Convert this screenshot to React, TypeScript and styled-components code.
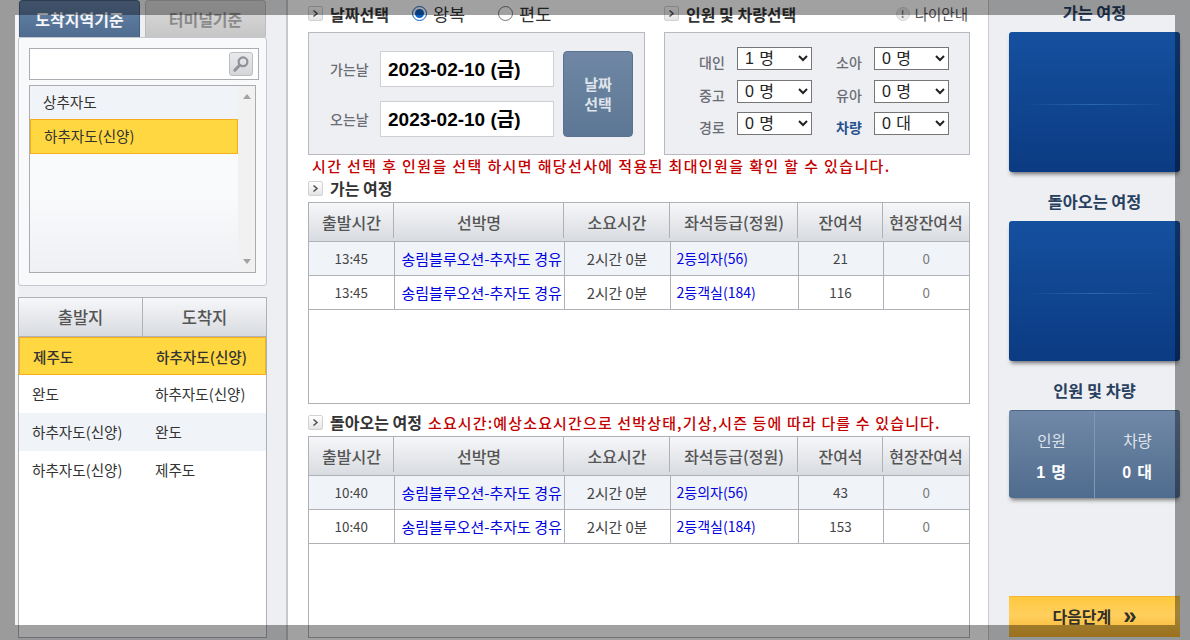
import React from 'react';
import styled, { createGlobalStyle } from 'styled-components';

const fontStack = '"Noto Sans CJK KR", "Liberation Sans", sans-serif';
const lineColor = '#b0b1b6';
const panelBg = '#eeeff2';

const GlobalStyle = createGlobalStyle`
  html, body {
    margin: 0;
    padding: 0;
    width: 1190px;
    height: 640px;
    overflow: hidden;
    background: #fff;
    font-family: ${fontStack};
    color: #333;
  }
  * {
    box-sizing: border-box;
  }
`;

const Page = styled.div`
  display: grid;
  grid-template-columns: 288px 700px 202px;
  width: 1190px;
  height: 640px;
  overflow: hidden;
`;

// dimmed frame of the modal that lies over the page
const ModalFrame = styled.div`
  position: fixed;
  inset: 0;
  border: 15px solid rgba(0, 0, 0, 0.37);
  pointer-events: none;
`;

/* left column */
const LeftColumn = styled.aside`
  display: flex;
  flex-direction: column;
  padding: 0 19px 2px 18px;
  background: linear-gradient(to right, #f6f6f8 0, #f6f6f8 18px, ${panelBg} 18px);
  border-right: 2px solid #c8c9ce;
`;

const TabRow = styled.div`
  display: flex;
  gap: 5px;
  height: 37px;
  padding-left: 1px;
`;

const Tab = styled.div<{ $active?: boolean }>`
  width: 121px;
  border: 1px solid ${p => (p.$active ? '#46617f' : '#bdbdbd')};
  border-bottom: 0;
  border-radius: 4px 4px 0 0;
  background: ${p => (p.$active ? 'linear-gradient(#6583a8, #4f6c90)' : 'linear-gradient(#dcdcdc, #c6c6c6)')};
  color: ${p => (p.$active ? '#f4f6f9' : '#8a8a8a')};
  font-size: 16px;
  font-weight: 700;
  line-height: 36px;
  text-align: center;
`;

const FilterPanel = styled.div`
  display: flex;
  flex-direction: column;
  gap: 5px;
  height: 249px;
  padding: 10px 11px 12px 10px;
  background: #f8f9fa;
  border: 1px solid #c6c7cc;
  border-radius: 3px;
`;

const SearchBox = styled.div`
  display: flex;
  align-items: center;
  justify-content: flex-end;
  width: 230px;
  height: 32px;
  padding-right: 5px;
  background: #fff;
  border: 1px solid #abacb2;
`;

const SearchButton = styled.div`
  display: flex;
  align-items: center;
  justify-content: center;
  width: 24px;
  height: 24px;
  background: linear-gradient(#e9eaec, #d5d6da);
  border: 1px solid #bcbdc2;
  border-radius: 3px;
`;

const ListBox = styled.div`
  display: grid;
  grid-template-columns: 208px 1fr;
  width: 227px;
  height: 189px;
  border: 1px solid #abacb2;
`;

const ListItems = styled.div`
  background: linear-gradient(#f9fafc 60%, #eff0f3);
`;

const ListItem = styled.div<{ $selected?: boolean }>`
  height: ${p => (p.$selected ? 35 : 33)}px;
  padding-left: 13px;
  font-size: 14.6px;
  line-height: 32px;
  background: ${p => (p.$selected ? '#ffd740' : '#f0f3f8')};
  border: ${p => (p.$selected ? '1px solid #f5ae1c' : '0')};
`;

const ScrollTrack = styled.div`
  display: flex;
  flex-direction: column;
  justify-content: space-between;
  align-items: center;
  padding: 8px 0 8px;
  background: #f1f1f1;
`;

const ScrollArrow = styled.span<{ $down?: boolean }>`
  width: 0;
  height: 0;
  border-left: 4px solid transparent;
  border-right: 4px solid transparent;
  ${p => (p.$down ? 'border-top: 5px solid #a3a3a3;' : 'border-bottom: 5px solid #a3a3a3;')}
`;

const RouteTable = styled.div`
  flex: 1;
  margin-top: 11px;
  background: #fff;
  border: 1px solid ${lineColor};
`;

const RouteHeader = styled.div`
  display: grid;
  grid-template-columns: 123px 1fr;
  height: 39px;
  background: linear-gradient(#f6f7f9, #d8dbe0);
  border-bottom: 1px solid ${lineColor};
`;

const RouteHeaderCell = styled.div`
  font-size: 16.5px;
  font-weight: 500;
  line-height: 38px;
  color: #555;
  text-align: center;
  & + & {
    border-left: 1px solid ${lineColor};
  }
`;

const RouteRow = styled.div<{ $tone?: 'selected' | 'soft' }>`
  display: grid;
  grid-template-columns: 123px 1fr;
  height: 38px;
  padding-left: 13px;
  font-size: 14.6px;
  line-height: 37px;
  font-weight: ${p => (p.$tone === 'selected' ? 500 : 400)};
  background: ${p => (p.$tone === 'selected' ? '#ffd740' : p.$tone === 'soft' ? '#f0f3f8' : '#fff')};
  ${p => p.$tone === 'selected' && 'border: 1px solid #f5ae1c;'}
`;

/* center column */
const CenterColumn = styled.main`
  display: flex;
  flex-direction: column;
  padding-left: 20px;
`;

const TopTitles = styled.div`
  display: flex;
  align-items: center;
  height: 32px;
  padding-bottom: 5px;
`;

const TitleGroup = styled.div<{ $width: number }>`
  display: flex;
  align-items: center;
  width: ${p => p.$width}px;
`;

const SectionTitle = styled.div`
  display: flex;
  align-items: center;
  gap: 7px;
  font-size: 16px;
  font-weight: 700;
  line-height: 20px;
  color: #333;
  white-space: nowrap;
`;

const MarkerBox = styled.span`
  display: flex;
  align-items: center;
  justify-content: center;
  width: 15px;
  height: 15px;
  background: linear-gradient(#fff, #e4e4e6);
  border: 1px solid #d2d2d5;
  border-radius: 2px;
`;

const RadioLabel = styled.label<{ $left: number }>`
  display: flex;
  align-items: center;
  gap: 6px;
  margin-left: ${p => p.$left}px;
  font-size: 17.5px;
  line-height: 20px;
  color: #333;
`;

const Radio = styled.input`
  width: 15px;
  height: 15px;
  margin: 0;
  accent-color: #0a5fc7;
`;

const AgeGuide = styled.div`
  display: flex;
  align-items: center;
  gap: 5px;
  margin-left: auto;
  margin-right: 20px;
  font-size: 14.5px;
  color: #555;
`;

const GuideDot = styled.span`
  width: 14px;
  height: 14px;
  border-radius: 50%;
  background: #e9e9e9;
  border: 1px solid #d5d5d5;
  font-size: 10px;
  font-weight: 700;
  line-height: 12px;
  text-align: center;
  color: #777;
`;

const SelectPanels = styled.div`
  display: flex;
  gap: 19px;
`;

const OptionPanel = styled.div<{ $width: number }>`
  width: ${p => p.$width}px;
  height: 123px;
  background: ${panelBg};
  border: 1px solid #b9bac0;
`;

const DatePanel = styled(OptionPanel)`
  display: grid;
  grid-template-columns: 1fr 70px;
  column-gap: 9px;
  padding: 18px 11px 17px 21px;
`;

const DateRows = styled.div`
  display: flex;
  flex-direction: column;
  justify-content: space-between;
`;

const DateRow = styled.div`
  display: flex;
  align-items: center;
  justify-content: space-between;
`;

const FieldLabel = styled.span<{ $accent?: boolean }>`
  font-size: 14px;
  font-weight: 500;
  white-space: nowrap;
  color: ${p => (p.$accent ? '#254f8e' : '#6a6d75')};
  ${p => p.$accent && 'font-weight: 700;'}
`;

const DateValue = styled.div`
  width: 174px;
  height: 36px;
  padding-left: 7px;
  background: #fff;
  border: 1px solid #cfd0d3;
  font-family: "Liberation Sans", "Noto Sans CJK KR", sans-serif;
  font-size: 19px;
  font-weight: 700;
  line-height: 36px;
  color: #000;
  white-space: nowrap;
`;

const DateButton = styled.div`
  display: flex;
  align-items: center;
  justify-content: center;
  background: linear-gradient(#6f87a4, #5c7795);
  border: 1px solid #5b7390;
  border-radius: 4px;
  font-size: 15px;
  font-weight: 700;
  line-height: 20px;
  text-align: center;
  color: #dfe4ea;
`;

const PeoplePanel = styled(OptionPanel)`
  display: grid;
  grid-template-columns: 148px 1fr;
  padding: 14px 20px 0 0;
`;

const PeopleColumn = styled.div<{ $labelLeft: number }>`
  display: grid;
  grid-template-columns: ${p => p.$labelLeft}px 38px 1fr;
  grid-auto-rows: 32.5px;
  align-items: start;
  & > span {
    grid-column: 2;
    margin-top: 5px;
  }
`;

const PeopleSelect = styled.select`
  grid-column: 3;
  width: 75px;
  height: 23px;
  padding: 0 0 0 3px;
  font-family: "Liberation Sans", "Noto Sans CJK KR", sans-serif;
  font-size: 16px;
  letter-spacing: 0.4px;
  color: #222;
  background: #fff;
`;

const RedNote = styled.div`
  font-size: 15px;
  font-weight: 500;
  letter-spacing: 1.14px;
  color: #c40000;
  white-space: nowrap;
`;

const NoticeLine = styled(RedNote)`
  height: 23px;
  margin-left: 4px;
  letter-spacing: 1.37px;
  line-height: 22px;
`;

const TripTitle = styled.div`
  display: flex;
  align-items: center;
  gap: 6px;
  height: 24px;
  padding-bottom: 4px;
`;

const TripBox = styled.div<{ $height: number }>`
  width: 662px;
  height: ${p => p.$height}px;
  border: 1px solid ${lineColor};
  overflow: hidden;
`;

const TripTable = styled.table`
  width: 660px;
  table-layout: fixed;
  border-collapse: collapse;
`;

const HeadCell = styled.th`
  height: 38px;
  padding: 0;
  background:
    linear-gradient(${lineColor}, ${lineColor}) right top / 1px 35px no-repeat,
    linear-gradient(#f6f7f9, #d8dbe0);
  border-bottom: 1px solid ${lineColor};
  font-size: 16px;
  font-weight: 500;
  white-space: nowrap;
  color: #555;
  &:last-child {
    background: linear-gradient(#f6f7f9, #d8dbe0);
  }
`;

const Row = styled.tr<{ $soft?: boolean }>`
  background: ${p => (p.$soft ? '#f0f3f8' : '#fff')};
`;

const Cell = styled.td<{ $size?: number; $link?: boolean; $muted?: boolean; $pad?: number }>`
  height: 34px;
  padding: 0 0 0 ${p => p.$pad ?? 0}px;
  border-bottom: 1px solid ${lineColor};
  border-right: 1px solid ${lineColor};
  font-size: ${p => p.$size ?? 13.4}px;
  text-align: ${p => (p.$pad ? 'left' : 'center')};
  white-space: nowrap;
  overflow: hidden;
  color: ${p => (p.$link ? '#0000e0' : p.$muted ? '#7a7a7a' : '#444')};
  &:last-child {
    border-right: 0;
  }
`;

const TripGap = styled.div`
  height: 8px;
`;

/* right column */
const RightColumn = styled.aside`
  display: flex;
  flex-direction: column;
  padding: 0 10px 3px 20px;
  background: ${panelBg};
  border-left: 1px solid #c8c9ce;
`;

const SummaryTitle = styled.div`
  height: 32px;
  font-size: 16.3px;
  font-weight: 700;
  line-height: 25px;
  color: #27405f;
  text-align: center;
  white-space: nowrap;
`;

const BlueCard = styled.div`
  height: 140px;
  margin-bottom: 17px;
  border-radius: 3px;
  background:
    linear-gradient(to right, transparent 8%, #2a68aa 50%, transparent 92%) 0 72px / 100% 1px no-repeat,
    linear-gradient(#15509f, #0b3b82);
  box-shadow: 0 4px 4px -2px rgba(0, 0, 0, 0.55);
`;

const CountCard = styled.div`
  display: grid;
  grid-template-columns: 85px 1fr;
  height: 88px;
  border-radius: 3px;
  background: linear-gradient(#7189a8, #4f6b8d);
  border-top: 1px solid #4c6684;
  box-shadow: 0 4px 4px -2px rgba(0, 0, 0, 0.5);
`;

const CountCell = styled.div`
  display: flex;
  flex-direction: column;
  align-items: center;
  gap: 13px;
  padding-top: 19px;
  font-size: 15.5px;
  line-height: 20px;
  color: #dfe4ea;
  & + & {
    border-left: 1px solid #8098b5;
  }
`;

const CountValue = styled.strong`
  font-family: "Liberation Sans", "Noto Sans CJK KR", sans-serif;
  font-size: 16px;
  letter-spacing: 0.8px;
  color: #fff;
`;

const NextButton = styled.div`
  display: flex;
  align-items: center;
  justify-content: center;
  gap: 12px;
  height: 41px;
  margin-top: auto;
  padding-bottom: 2px;
  background: linear-gradient(#ffc93f, #ffcf5e 45%, #f6b32c);
  border-top: 1px solid #f6b72f;
  font-size: 16px;
  font-weight: 700;
  color: #33302a;
`;

const NextArrows = styled.span`
  font-family: "Liberation Sans", sans-serif;
  font-size: 24px;
  line-height: 24px;
`;

const Chevron = () => (
  <svg width="7" height="9" viewBox="0 0 7 9" fill="none">
    <path d="M1.5 1.5 L5 4.5 L1.5 7.5" stroke="#555" strokeWidth="1.6" />
  </svg>
);

const Magnifier = () => (
  <svg width="18" height="18" viewBox="0 0 18 18" fill="none">
    <circle cx="11" cy="6.8" r="4.4" stroke="#8f9196" strokeWidth="2.2" />
    <path d="M7.6 10.2 L2.8 15.2" stroke="#8f9196" strokeWidth="3" strokeLinecap="round" />
  </svg>
);

const Marker = () => (
  <MarkerBox>
    <Chevron />
  </MarkerBox>
);

type Trip = { time: string; left: string; room: string; onsite: string; soft?: boolean };

const outbound: Trip[] = [
  { time: '13:45', left: '21', room: '2등의자(56)', onsite: '0', soft: true },
  { time: '13:45', left: '116', room: '2등객실(184)', onsite: '0' },
];

const inbound: Trip[] = [
  { time: '10:40', left: '43', room: '2등의자(56)', onsite: '0', soft: true },
  { time: '10:40', left: '153', room: '2등객실(184)', onsite: '0' },
];

const columnWidths = [85, 170, 106, 128, 85, 86];
const heads = ['출발시간', '선박명', '소요시간', '좌석등급(정원)', '잔여석', '현장잔여석'];

const TripGrid = ({ rows, height }: { rows: Trip[]; height: number }) => (
  <TripBox $height={height}>
    <TripTable>
      <colgroup>
        {columnWidths.map((w, i) => (
          <col key={i} width={w} />
        ))}
      </colgroup>
      <thead>
        <tr>
          {heads.map(h => (
            <HeadCell key={h}>{h}</HeadCell>
          ))}
        </tr>
      </thead>
      <tbody>
        {rows.map((r, i) => (
          <Row key={i} $soft={r.soft}>
            <Cell>{r.time}</Cell>
            <Cell $link $size={15} $pad={7}>
              송림블루오션-추자도 경유
            </Cell>
            <Cell $size={14.8}>2시간 0분</Cell>
            <Cell $link $size={14} $pad={6}>
              {r.room}
            </Cell>
            <Cell>{r.left}</Cell>
            <Cell $muted>{r.onsite}</Cell>
          </Row>
        ))}
      </tbody>
    </TripTable>
  </TripBox>
);

const Pick = ({ value }: { value: string }) => (
  <PeopleSelect defaultValue={value}>
    <option>{value}</option>
  </PeopleSelect>
);

export default function App() {
  return (
    <>
      <GlobalStyle />
      <Page>
        <LeftColumn>
          <TabRow>
            <Tab $active>도착지역기준</Tab>
            <Tab>터미널기준</Tab>
          </TabRow>
          <FilterPanel>
            <SearchBox>
              <SearchButton>
                <Magnifier />
              </SearchButton>
            </SearchBox>
            <ListBox>
              <ListItems>
                <ListItem>상추자도</ListItem>
                <ListItem $selected>하추자도(신양)</ListItem>
              </ListItems>
              <ScrollTrack>
                <ScrollArrow />
                <ScrollArrow $down />
              </ScrollTrack>
            </ListBox>
          </FilterPanel>
          <RouteTable>
            <RouteHeader>
              <RouteHeaderCell>출발지</RouteHeaderCell>
              <RouteHeaderCell>도착지</RouteHeaderCell>
            </RouteHeader>
            <RouteRow $tone="selected">
              <span>제주도</span>
              <span>하추자도(신양)</span>
            </RouteRow>
            <RouteRow>
              <span>완도</span>
              <span>하추자도(신양)</span>
            </RouteRow>
            <RouteRow $tone="soft">
              <span>하추자도(신양)</span>
              <span>완도</span>
            </RouteRow>
            <RouteRow>
              <span>하추자도(신양)</span>
              <span>제주도</span>
            </RouteRow>
          </RouteTable>
        </LeftColumn>

        <CenterColumn>
          <TopTitles>
            <TitleGroup $width={356}>
              <SectionTitle>
                <Marker />
                날짜선택
              </SectionTitle>
              <RadioLabel $left={23}>
                <Radio type="radio" name="way" defaultChecked />
                왕복
              </RadioLabel>
              <RadioLabel $left={33}>
                <Radio type="radio" name="way" />
                편도
              </RadioLabel>
            </TitleGroup>
            <SectionTitle>
              <Marker />
              인원 및 차량선택
            </SectionTitle>
            <AgeGuide>
              <GuideDot>!</GuideDot>
              나이안내
            </AgeGuide>
          </TopTitles>

          <SelectPanels>
            <DatePanel $width={337}>
              <DateRows>
                <DateRow>
                  <FieldLabel>가는날</FieldLabel>
                  <DateValue>2023-02-10 (금)</DateValue>
                </DateRow>
                <DateRow>
                  <FieldLabel>오는날</FieldLabel>
                  <DateValue>2023-02-10 (금)</DateValue>
                </DateRow>
              </DateRows>
              <DateButton>
                날짜
                <br />
                선택
              </DateButton>
            </DatePanel>
            <PeoplePanel $width={306}>
              <PeopleColumn $labelLeft={34}>
                <FieldLabel>대인</FieldLabel>
                <Pick value="1 명" />
                <FieldLabel>중고</FieldLabel>
                <Pick value="0 명" />
                <FieldLabel>경로</FieldLabel>
                <Pick value="0 명" />
              </PeopleColumn>
              <PeopleColumn $labelLeft={23}>
                <FieldLabel>소아</FieldLabel>
                <Pick value="0 명" />
                <FieldLabel>유아</FieldLabel>
                <Pick value="0 명" />
                <FieldLabel $accent>차량</FieldLabel>
                <Pick value="0 대" />
              </PeopleColumn>
            </PeoplePanel>
          </SelectPanels>

          <NoticeLine>시간 선택 후 인원을 선택 하시면 해당선사에 적용된 최대인원을 확인 할 수 있습니다.</NoticeLine>
          <TripTitle>
            <SectionTitle>
              <Marker />
              가는 여정
            </SectionTitle>
          </TripTitle>
          <TripGrid rows={outbound} height={202} />
          <TripGap />
          <TripTitle>
            <SectionTitle>
              <Marker />
              돌아오는 여정
            </SectionTitle>
            <RedNote>소요시간:예상소요시간으로 선박상태,기상,시즌 등에 따라 다를 수 있습니다.</RedNote>
          </TripTitle>
          <TripGrid rows={inbound} height={202} />
        </CenterColumn>

        <RightColumn>
          <SummaryTitle>가는 여정</SummaryTitle>
          <BlueCard />
          <SummaryTitle>돌아오는 여정</SummaryTitle>
          <BlueCard />
          <SummaryTitle>인원 및 차량</SummaryTitle>
          <CountCard>
            <CountCell>
              인원
              <CountValue>1 명</CountValue>
            </CountCell>
            <CountCell>
              차량
              <CountValue>0 대</CountValue>
            </CountCell>
          </CountCard>
          <NextButton>
            다음단계
            <NextArrows>»</NextArrows>
          </NextButton>
        </RightColumn>
      </Page>
      <ModalFrame />
    </>
  );
}
